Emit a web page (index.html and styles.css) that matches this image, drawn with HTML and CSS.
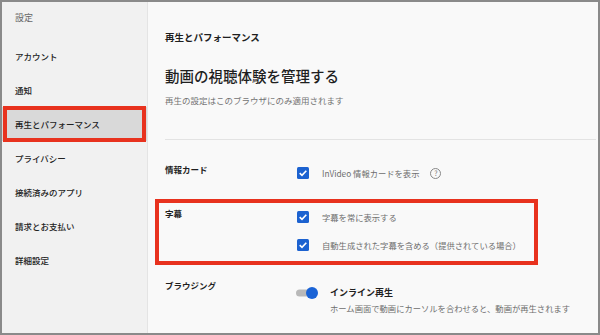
FILE: index.html
```html
<!DOCTYPE html>
<html lang="ja">
<head>
    <meta charset="UTF-8">
    <meta name="viewport" content="width=device-width, initial-scale=1.0">
    <title>設定 - 再生とパフォーマンス</title>
    <link rel="stylesheet" href="styles.css">
</head>
<body>
    <div class="window">
        <nav class="sidebar">
            <div class="sidebar-title">設定</div>
            <a class="nav-item">アカウント</a>
            <a class="nav-item">通知</a>
            <a class="nav-item active">再生とパフォーマンス</a>
            <a class="nav-item">プライバシー</a>
            <a class="nav-item">接続済みのアプリ</a>
            <a class="nav-item">請求とお支払い</a>
            <a class="nav-item">詳細設定</a>
        </nav>
        <main class="content">
            <header class="page-head">
                <div class="crumb">再生とパフォーマンス</div>
                <h1 class="page-title">動画の視聴体験を管理する</h1>
                <p class="page-desc">再生の設定はこのブラウザにのみ適用されます</p>
            </header>

            <section class="setting-row row-info">
                <div class="setting-label">情報カード</div>
                <div class="options">
                    <label class="option">
                        <svg class="check" width="12" height="12" viewBox="0 0 12 12"><rect width="12" height="12" rx="1.5" fill="#1c62d0"/><path d="M2.7 6.1l2.3 2.3 4.3-4.7" fill="none" stroke="#fff" stroke-width="1.6"/></svg>
                        <span>InVideo 情報カードを表示</span>
                        <span class="help">?</span>
                    </label>
                </div>
            </section>

            <section class="setting-row row-captions">
                <div class="setting-label">字幕</div>
                <div class="options">
                    <label class="option">
                        <svg class="check" width="12" height="12" viewBox="0 0 12 12"><rect width="12" height="12" rx="1.5" fill="#1c62d0"/><path d="M2.7 6.1l2.3 2.3 4.3-4.7" fill="none" stroke="#fff" stroke-width="1.6"/></svg>
                        <span>字幕を常に表示する</span>
                    </label>
                    <label class="option">
                        <svg class="check" width="12" height="12" viewBox="0 0 12 12"><rect width="12" height="12" rx="1.5" fill="#1c62d0"/><path d="M2.7 6.1l2.3 2.3 4.3-4.7" fill="none" stroke="#fff" stroke-width="1.6"/></svg>
                        <span>自動生成された字幕を含める（提供されている場合）</span>
                    </label>
                </div>
            </section>

            <section class="setting-row row-browse">
                <div class="setting-label">ブラウジング</div>
                <div class="options">
                    <div class="toggle-option">
                        <svg class="toggle" width="24" height="16" viewBox="0 0 24 16"><rect x="1" y="4.5" width="17" height="7" rx="3.5" fill="#b9b9b9"/><circle cx="17" cy="8" r="6" fill="#1a63d6"/></svg>
                        <div>
                            <div class="toggle-title">インライン再生</div>
                            <div class="toggle-desc">ホーム画面で動画にカーソルを合わせると、動画が再生されます</div>
                        </div>
                    </div>
                </div>
            </section>
        </main>
    </div>
</body>
</html>
```

FILE: styles.css
```css
body {
    margin: 0;
    font-family: "Noto Sans CJK JP", "Noto Sans", sans-serif;
    color: #1f1f1f;
}
.window {
    width: 600px;
    height: 335px;
    box-sizing: border-box;
    border: 2px solid #8a8a8a;
    display: flex;
    overflow: hidden;
    background: #f9f9f9;
}
.sidebar {
    width: 146px;
    flex-shrink: 0;
    box-sizing: border-box;
    background: #f1f1f1;
    border-right: 1px solid #e4e4e4;
}
.sidebar-title {
    height: 37px;
    box-sizing: border-box;
    padding: 10px 0 0 13px;
    line-height: 12px;
    font-size: 9px;
    color: #666;
}
.nav-item {
    display: block;
    position: relative;
    height: 34px;
    line-height: 34px;
    padding-left: 13px;
    font-size: 8.5px;
    font-weight: 500;
    color: #222;
}
.nav-item.active {
    background: #d9d9d9;
}
.nav-item.active::after {
    content: '';
    position: absolute;
    left: 1px;
    right: 1px;
    top: -1px;
    bottom: -1px;
    border: 4px solid #e8321e;
}
.content {
    flex: 1;
    padding: 0 2px 0 17px;
}
.page-head {
    padding-bottom: 33px;
    border-bottom: 1px solid #e3e3e3;
}
.crumb {
    margin-top: 29px;
    line-height: 12px;
    font-size: 9.5px;
    font-weight: 700;
}
.page-title {
    margin: 23px 0 0;
    line-height: 20px;
    font-size: 14.5px;
    font-weight: 500;
}
.page-desc {
    margin: 8px 0 0;
    line-height: 12px;
    font-size: 8.5px;
    color: #737373;
}
.setting-row {
    display: grid;
    grid-template-columns: 132px 1fr;
    position: relative;
}
.row-info {
    padding: 23px 0 19px;
}
.row-captions {
    padding: 7px 0 11px;
}
.row-captions::after {
    content: '';
    position: absolute;
    left: -10px;
    top: -1px;
    bottom: -1px;
    width: 383px;
    box-sizing: border-box;
    border: 4px solid #e8321e;
}
.row-browse {
    padding-top: 15px;
}
.setting-label {
    line-height: 12px;
    font-size: 8.5px;
    font-weight: 700;
}
.options {
    margin-top: 2px;
    display: flex;
    flex-direction: column;
    gap: 12px;
}
.option {
    display: flex;
    align-items: center;
    height: 16px;
    font-size: 8.3px;
    color: #6e6e6e;
}
.check {
    margin-right: 13px;
    flex-shrink: 0;
}
.help {
    width: 9px;
    height: 9px;
    margin-left: 11px;
    border: 1px solid #888;
    border-radius: 50%;
    font-size: 7px;
    line-height: 9px;
    text-align: center;
    color: #777;
}
.toggle-option {
    display: flex;
    align-items: flex-start;
    gap: 11px;
    margin-top: 4px;
    margin-left: -2px;
}
.toggle {
    flex-shrink: 0;
}
.toggle-title {
    line-height: 16px;
    font-size: 9px;
    font-weight: 700;
}
.toggle-desc {
    line-height: 14px;
    font-size: 8.3px;
    color: #6e6e6e;
}
```
